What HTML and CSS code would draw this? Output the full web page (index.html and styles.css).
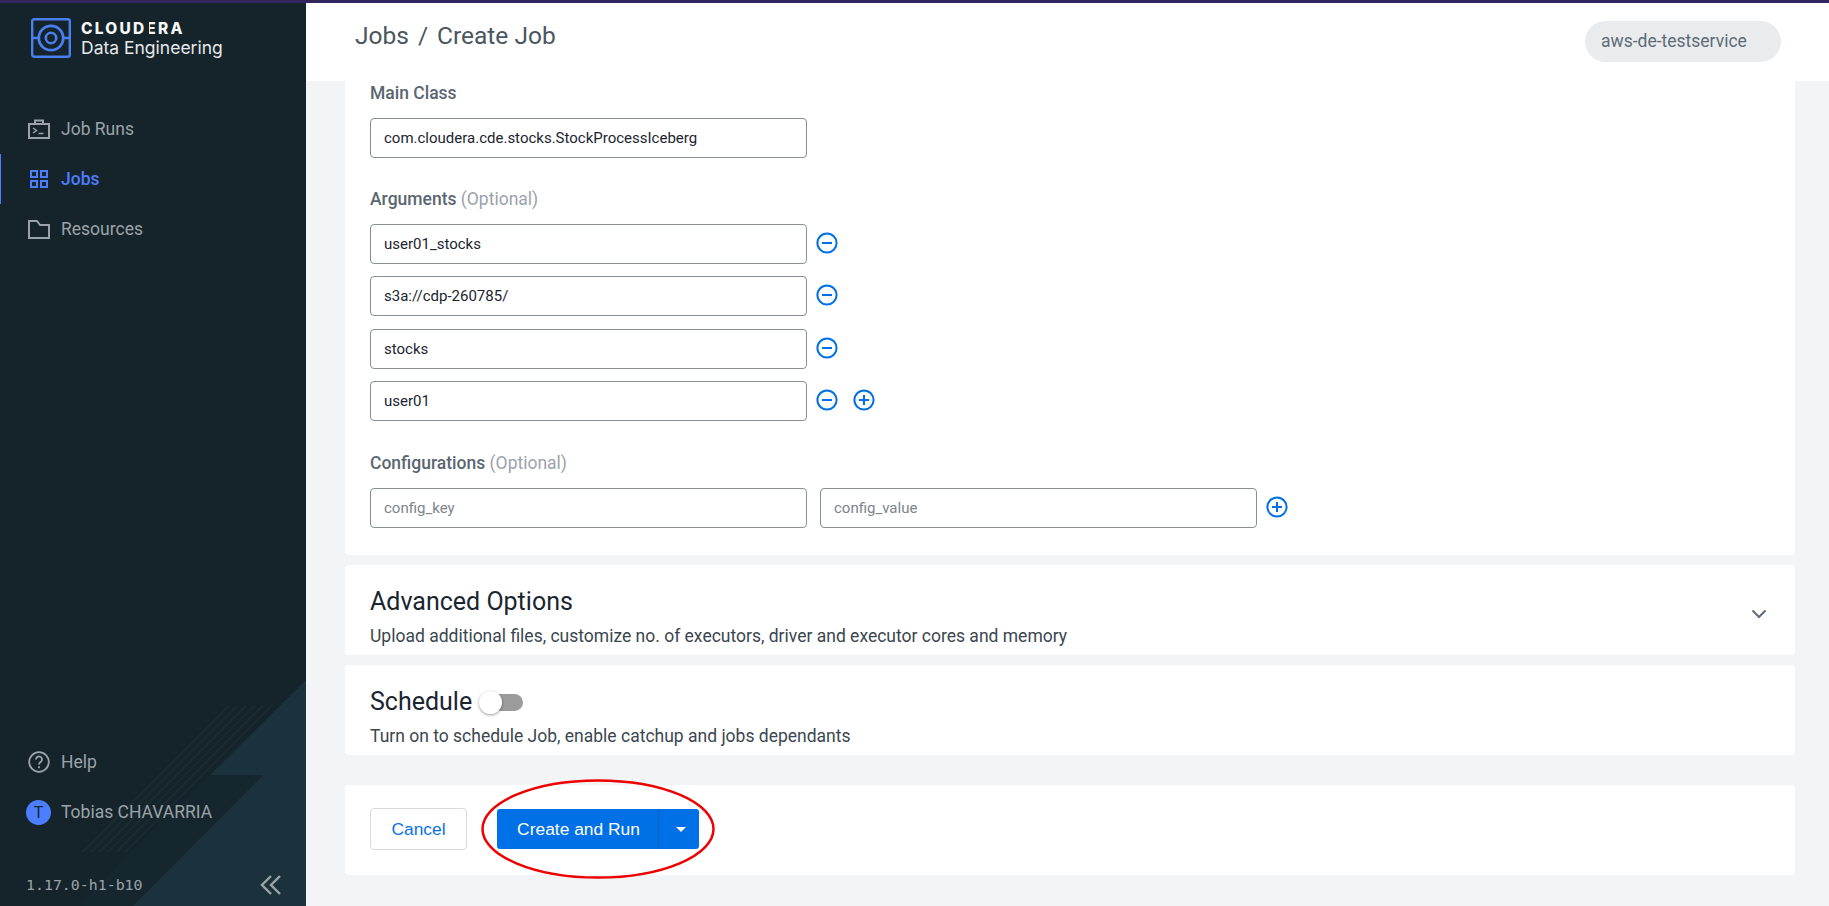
FILE: index.html
```html
<!DOCTYPE html>
<html>

	<head>
		<meta charset="utf-8">
		<title>Create Job</title>
		<link rel="stylesheet" href="styles.css">
	</head>

	<body>
		<div class="topline"></div>
		<div class="app">
			<aside class="sidebar">
				<svg class="side_bg" viewBox="0 0 306 906" width="306" height="906">
					<defs>
						<pattern id="stripes" width="6" height="6" patternUnits="userSpaceOnUse" patternTransform="rotate(45)">
							<rect width="6" height="6" fill="#15242b"></rect>
							<rect width="1.6" height="6" fill="#1a2b33"></rect>
						</pattern>
					</defs>
					<polygon points="227,705 277,705 130,852 80,852" fill="url(#stripes)"></polygon>
					<polygon points="210,775 263,775 133,906 80,906 130,852" fill="#16262f"></polygon>
					<polygon points="306,680 210,775 263,775 133,906 306,906" fill="#1b323c"></polygon>
				</svg>

				<div class="logo">
					<svg class="logo_mark" viewBox="0 0 40 40" width="40" height="40">
						<rect x="1.2" y="1.2" width="37.6" height="37.6" rx="2" fill="none" stroke="#4a7ff0" stroke-width="2.4"></rect>
						<path d="M1 20h6M33 20h6" stroke="#4a7ff0" stroke-width="2.4"></path>
						<circle cx="20" cy="20" r="12.2" fill="none" stroke="#4a7ff0" stroke-width="2.8"></circle>
						<circle cx="20" cy="20" r="5.2" fill="none" stroke="#4a7ff0" stroke-width="2.6"></circle>
					</svg>
					<div class="logo_text">
						<div class="brand">CLOUD<span class="brand_e">E</span>RA</div>
						<div class="product">Data Engineering</div>
					</div>
				</div>

				<ul class="nav">
					<li>
						<svg viewBox="0 0 22 20" width="22" height="20" fill="none" stroke="#9ba3a8" stroke-width="2">
							<path d="M1 5h20v14H1zM7 5V1.5h8V5"></path>
							<path d="M5 9l3.5 2.5L5 14M10.5 14.500h5" stroke-width="1.500"></path>
						</svg>
						<span>Job Runs</span>
					</li>
					<li class="active">
						<svg viewBox="0 0 22 20" width="22" height="20" fill="none" stroke="#4c7fff" stroke-width="2">
							<path d="M3 2h6v6H3zM13 2h6v6h-6zM3 12h6v6H3zM13 12h6v6h-6z"></path>
						</svg>
						<span>Jobs</span>
					</li>
					<li>
						<svg viewBox="0 0 22 20" width="22" height="20" fill="none" stroke="#9ba3a8" stroke-width="2">
							<path d="M1 2h8l3 4h9v13H1z"></path>
						</svg>
						<span>Resources</span>
					</li>
				</ul>

				<ul class="nav nav_bottom">
					<li>
						<svg viewBox="0 0 22 22" width="22" height="22" fill="none" stroke="#9ba3a8" stroke-width="1.800">
							<circle cx="11" cy="11" r="9.800"></circle>
							<path d="M8 8.500a3 3 0 1 1 4.600 2.500c-1 .7-1.600 1.200-1.600 2.500"></path>
							<path d="M11 15.300v1.900"></path>
						</svg>
						<span>Help</span>
					</li>
					<li>
						<div class="avatar">T</div>
						<span>Tobias CHAVARRIA</span>
					</li>
				</ul>

				<div class="side_foot">
					<span class="version">1.17.0-h1-b10</span>
					<svg viewBox="0 0 22 20" width="22" height="20" fill="none" stroke="#9ba3a8" stroke-width="2.400">
						<path d="M11 1L2 10l9 9M20 1l-9 9 9 9"></path>
					</svg>
				</div>
			</aside>

			<div class="main">
				<header class="header">
					<div class="crumbs"><span>Jobs</span><span class="sep">/</span><span>Create Job</span></div>
					<div class="pill">aws-de-testservice</div>
				</header>

				<div class="content">
					<section class="card form_card">
						<label class="lbl">Main Class</label>
						<div class="row"><input class="inp" type="text" value="com.cloudera.cde.stocks.StockProcessIceberg"></div>

						<label class="lbl">Arguments <em>(Optional)</em></label>
						<div class="rows">
							<div class="row">
								<input class="inp" type="text" value="user01_stocks">
								<svg class="ico" viewBox="0 0 22 22" width="22" height="22"><circle cx="11" cy="11" r="9.600"></circle><path d="M6 11h10"></path></svg>
							</div>
							<div class="row">
								<input class="inp" type="text" value="s3a://cdp-260785/">
								<svg class="ico" viewBox="0 0 22 22" width="22" height="22"><circle cx="11" cy="11" r="9.600"></circle><path d="M6 11h10"></path></svg>
							</div>
							<div class="row">
								<input class="inp" type="text" value="stocks">
								<svg class="ico" viewBox="0 0 22 22" width="22" height="22"><circle cx="11" cy="11" r="9.600"></circle><path d="M6 11h10"></path></svg>
							</div>
							<div class="row">
								<input class="inp" type="text" value="user01">
								<svg class="ico" viewBox="0 0 22 22" width="22" height="22"><circle cx="11" cy="11" r="9.600"></circle><path d="M6 11h10"></path></svg>
								<svg class="ico" viewBox="0 0 22 22" width="22" height="22"><circle cx="11" cy="11" r="9.600"></circle><path d="M6 11h10M11 6v10"></path></svg>
							</div>
						</div>

						<label class="lbl">Configurations <em>(Optional)</em></label>
						<div class="row row_conf">
							<input class="inp" type="text" placeholder="config_key">
							<input class="inp" type="text" placeholder="config_value">
							<svg class="ico" viewBox="0 0 22 22" width="22" height="22"><circle cx="11" cy="11" r="9.600"></circle><path d="M6 11h10M11 6v10"></path></svg>
						</div>
					</section>

					<section class="card fold">
						<div class="fold_body">
							<h2>Advanced Options</h2>
							<p>Upload additional files, customize no. of executors, driver and executor cores and memory</p>
						</div>
						<svg class="chev" viewBox="0 0 16 10" width="16" height="10" fill="none" stroke="#5f6b76" stroke-width="2"><path d="M1.500 1.500L8 8l6.500-6.500"></path></svg>
					</section>

					<section class="card fold">
						<div class="fold_body">
							<h2>Schedule <span class="toggle"><i></i></span></h2>
							<p>Turn on to schedule Job, enable catchup and jobs dependants</p>
						</div>
					</section>

					<section class="card actions">
						<button class="btn_cancel">Cancel</button>
						<div class="btn_group">
							<button class="btn_main">Create and Run</button>
							<button class="btn_drop"><b></b></button>
						</div>
						<svg class="circle_mark" viewBox="0 0 236 102" width="236" height="102">
							<ellipse cx="118" cy="50" rx="115.500" ry="48.500" fill="none" stroke="#ee0000" stroke-width="2.500"></ellipse>
						</svg>
					</section>
				</div>
			</div>
		</div>
	</body>

</html>
```

FILE: styles.css
```css
* {
	margin: 0;
	padding: 0;
	list-style: none;
	box-sizing: border-box;
}

html,
body {
	height: 100%;
	overflow: hidden;
}

body {
	font-family: Roboto, "Liberation Sans", sans-serif;
	font-size: 17.500px;
	color: #1b2530;
	background: #f3f4f6;
}

.topline {
	height: 3px;
	background: #33265f;
}

.app {
	display: flex;
	height: 903px;
}

/* left side */
.sidebar {
	width: 306px;
	flex: none;
	position: relative;
	display: flex;
	flex-direction: column;
	background: #15232b;
	overflow: hidden;
}

.side_bg {
	position: absolute;
	left: 0;
	top: -3px;
}

.logo {
	position: relative;
	display: flex;
	gap: 10px;
	padding: 15px 0 0 31px;
	height: 101px;
}

.logo_text {
	color: #e6e9eb;
}

.brand {
	font-family: Inter, sans-serif;
	font-weight: 800;
	font-size: 15.500px;
	line-height: 14px;
	letter-spacing: 2.200px;
	color: #f4f6f7;
	margin-top: 4px;
}

.brand_e {
	position: relative;
}

.brand_e::after {
	content: "";
	position: absolute;
	left: 0;
	top: 0;
	bottom: 0;
	width: 3px;
	background: #15232b;
}

.product {
	font-family: Inter, sans-serif;
	font-size: 17.500px;
	line-height: 20px;
	margin-top: 2px;
}

.nav {
	position: relative;
	color: #9ba3a8;
}

.nav li {
	height: 50px;
	display: flex;
	align-items: center;
	gap: 11px;
	padding-left: 28px;
}

.nav li.active {
	color: #4c7fff;
	font-weight: 500;
	border-left: 1px solid #4c7fff;
	padding-left: 27px;
}

.nav_bottom {
	margin-top: auto;
}

.avatar {
	width: 25px;
	height: 25px;
	margin-left: -2px;
	margin-right: -1px;
	border-radius: 50%;
	background: #4c7fff;
	color: #15232b;
	font-size: 16px;
	text-align: center;
	line-height: 25px;
}

.side_foot {
	position: relative;
	display: flex;
	justify-content: space-between;
	align-items: center;
	height: 69px;
	padding: 27px 24px 0 26px;
	color: #9ba3a8;
}

.version {
	font-family: "DejaVu Sans Mono", monospace;
	font-size: 14.900px;
}

/* right side */
.main {
	flex: 1;
	min-width: 0;
}

.header {
	height: 78px;
	background: #fff;
	display: flex;
	justify-content: space-between;
	align-items: flex-start;
	padding: 18px 48px 0 49px;
}

.crumbs {
	display: flex;
	gap: 9px;
	font-size: 24.500px;
	line-height: 30px;
	color: #4a5660;
}

.pill {
	width: 196px;
	height: 41px;
	border-radius: 21px;
	background: #e9ebed;
	color: #5d6b78;
	padding-left: 16px;
	line-height: 40px;
}

.content {
	padding: 0 34px 0 39px;
}

.card {
	background: #fff;
	border-radius: 4px;
	margin-bottom: 10px;
	padding: 0 25px;
}

.form_card {
	height: 474px;
	border-radius: 0 0 4px 4px;
}

.lbl {
	display: block;
	font-weight: 500;
	line-height: 25px;
	color: #5a6672;
	margin-bottom: 12px;
}

.lbl em {
	font-style: normal;
	font-weight: 400;
	color: #9aa3ab;
}

.row {
	display: flex;
	align-items: center;
	gap: 9px;
	margin-bottom: 29px;
}

.rows .row {
	margin-bottom: 12.400px;
}

.rows {
	margin-bottom: 29.900px;
}

.row_conf {
	gap: 13px;
}

.inp {
	width: 437px;
	height: 40px;
	padding: 0 13px;
	border: 1px solid #868e96;
	border-radius: 4px;
	font-family: Roboto, sans-serif;
	font-size: 15px;
	color: #1b2530;
	background: #fff;
}

.inp::placeholder {
	color: #7b858e;
}

.ico {
	flex: none;
	margin-bottom: 2px;
	fill: none;
	stroke: #0070e6;
	stroke-width: 2;
}

.ico + .ico {
	margin-left: 6px;
}

.row_conf .ico {
	margin-left: -4px;
}

.fold {
	height: 90px;
	display: flex;
	justify-content: space-between;
	align-items: center;
}

.fold_body {
	align-self: flex-start;
	padding-top: 19px;
}

h2 {
	font-weight: 400;
	font-size: 25px;
	line-height: 36px;
	color: #1b2530;
	display: flex;
	align-items: center;
	gap: 8px;
}

.fold p {
	line-height: 24px;
	color: #3a4650;
	margin-top: 4px;
}

.chev {
	margin: 7px 3px 0 0;
}

.toggle {
	position: relative;
	display: inline-block;
	width: 40px;
	height: 17px;
	margin-left: 3px;
	border-radius: 9px;
	background: #9b9b9b;
}

.toggle i {
	position: absolute;
	left: -4px;
	top: -3px;
	width: 23px;
	height: 23px;
	border-radius: 50%;
	background: #fff;
	box-shadow: 0 1px 3px rgba(0, 0, 0, .4);
}

.actions {
	position: relative;
	display: flex;
	align-items: center;
	gap: 30px;
	height: 90px;
	margin-top: 30px;
	padding-bottom: 2px;
}

.btn_cancel,
.btn_main,
.btn_drop {
	font-family: "Liberation Sans", Arial, sans-serif;
	font-size: 17.400px;
	cursor: pointer;
}

.btn_cancel {
	width: 97px;
	height: 42px;
	border: 1px solid #d8dadd;
	border-radius: 4px;
	background: #fff;
	color: #0a72e6;
}

.btn_group {
	display: flex;
	height: 40px;
}

.btn_main {
	width: 162px;
	padding-left: 2px;
	border: 0;
	border-right: 1px solid #0a5cb8;
	border-radius: 3px 0 0 3px;
	background: #0070e6;
	color: #fff;
}

.btn_drop {
	width: 40px;
	padding-left: 3px;
	border: 0;
	border-radius: 0 3px 3px 0;
	background: #0070e6;
}

.btn_drop b {
	display: block;
	width: 0;
	margin: 0 auto;
	border-left: 5px solid transparent;
	border-right: 5px solid transparent;
	border-top: 5px solid #fff;
}

.circle_mark {
	position: absolute;
	left: 134.500px;
	top: -6px;
}
```
